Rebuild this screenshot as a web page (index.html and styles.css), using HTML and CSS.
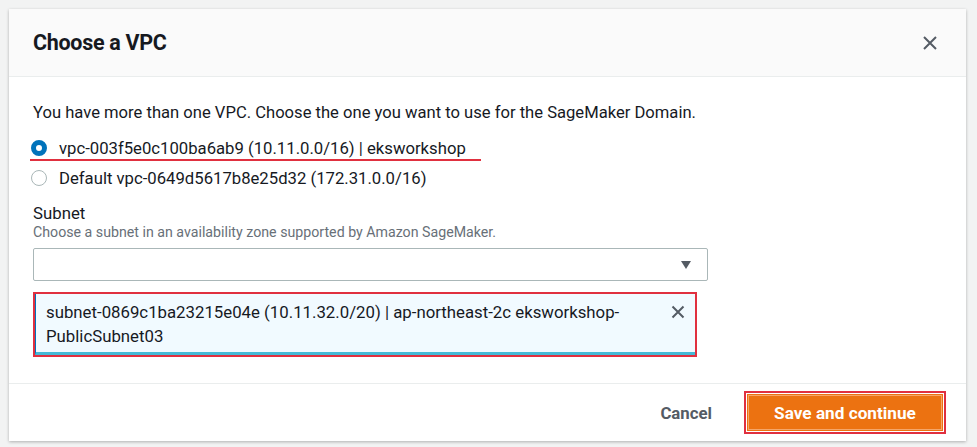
FILE: index.html
```html
<!DOCTYPE html>
<html>
<head>
<meta charset="utf-8">
<link rel="stylesheet" href="styles.css">
</head>
<body>
<div class="backdrop">
  <div class="modal">
    <div class="modal-header">
      <h2 class="title">Choose a VPC</h2>
      <button class="close" aria-label="Close">
        <svg width="16" height="16" viewBox="0 0 16 16"><path d="M2 2 L14 14 M14 2 L2 14" stroke="#545b64" stroke-width="2" fill="none"/></svg>
      </button>
    </div>
    <div class="modal-body">
      <p class="intro">You have more than one VPC. Choose the one you want to use for the SageMaker Domain.</p>
      <div class="radios">
        <label class="radio-row highlighted"><span class="radio checked"></span><span class="radio-label">vpc-003f5e0c100ba6ab9 (10.11.0.0/16) | eksworkshop</span></label>
        <label class="radio-row"><span class="radio"></span><span class="radio-label">Default vpc-0649d5617b8e25d32 (172.31.0.0/16)</span></label>
      </div>
      <div class="field">
        <div class="field-label">Subnet</div>
        <div class="field-desc">Choose a subnet in an availability zone supported by Amazon SageMaker.</div>
        <div class="select">
          <span class="caret"></span>
        </div>
        <div class="token-mark">
          <div class="token">
            <span class="token-text">subnet-0869c1ba23215e04e (10.11.32.0/20) | ap-northeast-2c eksworkshop-PublicSubnet03</span>
            <svg class="token-x" width="14" height="14" viewBox="0 0 14 14"><path d="M1.5 1.5 L12.5 12.5 M12.5 1.5 L1.5 12.5" stroke="#545b64" stroke-width="2" fill="none"/></svg>
          </div>
        </div>
      </div>
    </div>
    <div class="modal-footer">
      <button class="cancel">Cancel</button>
      <span class="primary-mark"><button class="primary">Save and continue</button></span>
    </div>
  </div>
</div>
</body>
</html>
```

FILE: styles.css
```css
html, body {
  margin: 0;
  padding: 0;
  background: #f2f3f3;
  font-family: Roboto, "Liberation Sans", Arial, sans-serif;
  color: #16191f;
}
.backdrop {
  padding: 9px 11px 6px 9px;
}
.modal {
  width: 957px;
  height: 432px;
  background: #fff;
  box-shadow: 0 1px 3px rgba(0, 0, 0, 0.28);
  display: flex;
  flex-direction: column;
}
.modal-header {
  height: 67px;
  background: #fafafa;
  border-bottom: 1px solid #eaeded;
  display: flex;
  align-items: center;
  justify-content: space-between;
  padding: 0 28px 0 24px;
}
.title {
  margin: 0;
  font-size: 21.5px;
  font-weight: 700;
  letter-spacing: -0.3px;
  color: #16191f;
}
.close {
  border: 0;
  background: transparent;
  padding: 0;
  width: 16px;
  height: 16px;
  display: flex;
}
.modal-body {
  flex: 1;
  padding: 0 24px;
  border-bottom: 1px solid #eaeded;
}
.intro {
  margin: 26px 0 0;
  font-size: 16.6px;
  line-height: 20px;
}
.radios {
  margin-top: 15px;
  display: flex;
  flex-direction: column;
  gap: 10px;
}
.radio-row {
  display: flex;
  align-items: center;
  height: 20px;
  font-size: 16.7px;
  position: relative;
  width: max-content;
}
.radio-row.highlighted::after {
  content: "";
  position: absolute;
  left: -3px;
  right: -15px;
  bottom: -3px;
  height: 2px;
  background: #e0303f;
}
.radio {
  box-sizing: border-box;
  width: 16px;
  height: 16px;
  border-radius: 50%;
  border: 1px solid #aab7b8;
  background: #fff;
  margin: 0 12px 0 -2px;
  flex: none;
}
.radio.checked {
  border: 5px solid #0073bb;
}
.field {
  margin-top: 15px;
}
.field-label {
  font-size: 16.8px;
  line-height: 20px;
}
.field-desc {
  font-size: 14.2px;
  line-height: 17px;
  color: #687078;
  margin-top: 1px;
}
.select {
  margin-top: 7px;
  width: 675px;
  height: 33px;
  box-sizing: border-box;
  border: 1px solid #aab7b8;
  border-radius: 2px;
  background: #fff;
  display: flex;
  align-items: center;
  justify-content: flex-end;
  padding-right: 16px;
}
.caret {
  width: 0;
  height: 0;
  border-left: 5.5px solid transparent;
  border-right: 5.5px solid transparent;
  border-top: 8px solid #545b64;
}
.token-mark {
  margin-top: 11px;
  width: 664px;
  box-sizing: border-box;
  border: 2px solid #e0303f;
}
.token {
  background: #f1faff;
  border-left: 1px solid #0073bb;
  border-bottom: 3px solid #44b9d6;
  display: flex;
  align-items: flex-start;
  justify-content: space-between;
  padding: 6px 10px 4px 10px;
}
.token-text {
  font-size: 16.8px;
  line-height: 24px;
  width: 590px;
}
.token-x {
  margin-top: 5px;
  flex: none;
}
.modal-footer {
  height: 57px;
  display: flex;
  align-items: center;
  justify-content: flex-end;
  padding-right: 20px;
  gap: 32px;
}
.cancel {
  border: 0;
  background: transparent;
  font-family: inherit;
  font-size: 16.8px;
  font-weight: 700;
  color: #545b64;
  padding: 0;
}
.primary-mark {
  border: 2px solid #e0303f;
  padding: 1px;
  display: flex;
}
.primary {
  border: 1px solid #ec7211;
  background: #ec7211;
  color: #fff;
  font-family: inherit;
  font-size: 17.2px;
  font-weight: 700;
  width: 196px;
  height: 37px;
  padding: 0;
  box-shadow: inset 0 0 0 1px #f5a66a;
}
```
